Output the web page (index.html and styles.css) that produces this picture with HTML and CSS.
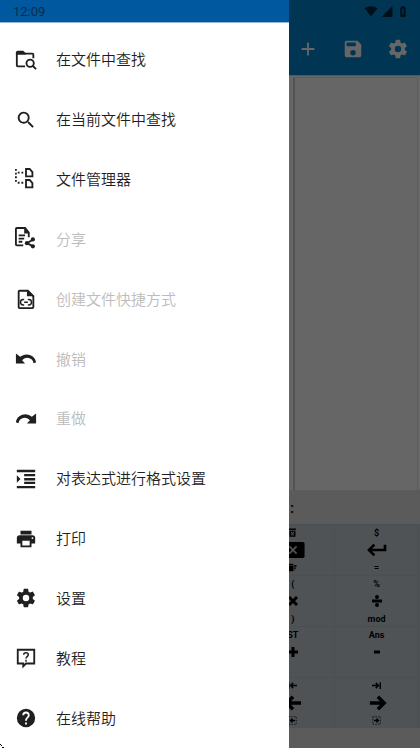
FILE: index.html
```html
<!DOCTYPE html>
<html lang="zh-CN">
<head>
<meta charset="utf-8">
<meta name="viewport" content="width=device-width, initial-scale=1">
<title>菜单</title>
<link rel="stylesheet" href="styles.css">
</head>
<body>
<main class="app">
  <header class="header">
    <div class="system">
      <svg viewBox="0 0 24 24" class="system-icon"><path d="M12 21 24 6C18 1 6 1 0 6z"/></svg>
      <svg viewBox="0 0 24 24" class="system-icon"><path d="M2 22h20V2z"/></svg>
      <svg viewBox="0 0 24 24" class="system-icon"><path fill-rule="evenodd" d="M15.700 4H14V2h-4v2H8.300C7.600 4 7 4.600 7 5.300v15.400c0 .7.600 1.300 1.300 1.300h7.400c.7 0 1.300-.6 1.300-1.300V5.300c0-.7-.6-1.300-1.300-1.300zM10.500 7h3v6l-2 6h-1z"/></svg>
    </div>
    <nav class="toolbar">
      <button class="tool" aria-label="新建"><svg class="icon" viewBox="0 0 24 24"><path d="M19 13h-6v6h-2v-6H5v-2h6V5h2v6h6z"/></svg></button>
      <button class="tool" aria-label="保存"><svg class="icon" viewBox="0 0 24 24"><path d="M17 3H5a2 2 0 0 0-2 2v14c0 1.100.9 2 2 2h14c1.100 0 2-.9 2-2V7zm-5 16a3 3 0 1 1 0-6 3 3 0 0 1 0 6zm3-10H5V5h10z"/></svg></button>
      <button class="tool" aria-label="设置"><svg class="icon" viewBox="0 0 24 24"><path d="M19.400 13a7.500 7.500 0 0 0 0-2l2.100-1.600c.2-.2.300-.4.100-.7l-2-3.400c-.1-.3-.4-.3-.6-.2l-2.500 1c-.5-.4-1.100-.7-1.700-1l-.4-2.600c0-.3-.2-.5-.5-.5h-4c-.2 0-.4.200-.5.500L9 5.100c-.6.300-1.200.6-1.700 1l-2.500-1c-.2-.1-.5 0-.6.200l-2 3.400c-.1.300-.1.500.1.700L4.500 11a7.500 7.500 0 0 0 0 2l-2.200 1.600c-.2.200-.2.400-.1.700l2 3.400c.1.300.4.300.6.200l2.500-1c.5.400 1.100.7 1.700 1l.4 2.600c.1.300.3.500.5.500h4c.3 0 .5-.2.500-.5l.4-2.600c.6-.3 1.200-.6 1.700-1l2.500 1c.2.100.5 0 .6-.2l2-3.400c.2-.3.100-.5-.1-.7zM12 15.500a3.500 3.500 0 1 1 0-7 3.500 3.500 0 0 1 0 7z"/></svg></button>
    </nav>
  </header>
  <section class="editor"><div class="page"></div></section>
  <div class="result">:</div>
  <section class="keypad">
    <button class="key key-first" aria-label="删除">
      <svg class="mini" viewBox="0 0 24 24"><path fill-rule="evenodd" d="M3 1h18v4H3zM4 7h16v16H4zM7 10l3 5-3 5h3l2-3 2 3h3l-3-5 3-5h-3l-2 3-2-3z"/></svg>
      <svg class="wide" viewBox="0 0 24 18"><path d="M0 0h23q2 0 2 2v14q0 2-2 2H0z"/><path class="cut" d="m8 5 8 8M16 5l-8 8"/></svg>
      <svg class="mini" viewBox="0 0 24 24"><path d="M0 2h14v4H0zM2 7h12v15H2zM15 6h8v4h-8zM15 12h6v3h-6zM15 17h3v3h-3z"/></svg>
    </button>
    <button class="key" aria-label="回车">
      <span>$</span>
      <svg class="wide" viewBox="0 0 24 18"><path class="stroke" d="M21 3v6H4M9 3 3 9l6 6"/></svg>
      <span>=</span>
    </button>
    <button class="key key-first"><span>(</span><svg class="op" viewBox="0 0 16 16"><path class="stroke" d="m4 4 8 8M12 4l-8 8"/></svg><span>)</span></button>
    <button class="key"><span>%</span><svg class="op" viewBox="0 0 16 16"><path class="stroke" d="M3 8h10"/><circle cx="8" cy="4" r="2"/><circle cx="8" cy="12" r="2"/></svg><span>mod</span></button>
    <button class="key key-first"><span>ST</span><svg class="op" viewBox="0 0 16 16"><path class="stroke" d="M3 8h10M8 3v10"/></svg><span></span></button>
    <button class="key"><span>Ans</span><svg class="op" viewBox="0 0 16 16"><path class="stroke" d="M5 8h6"/></svg><span></span></button>
    <button class="key key-first" aria-label="左移">
      <svg class="mini" viewBox="0 0 24 24"><path class="heavy" d="M2 3v18M24 12H8M14 5l-7 7 7 7"/></svg>
      <svg class="wide" viewBox="0 0 24 18"><path class="heavy" d="M21 9H6M12 2 5 9l7 7"/></svg>
      <svg class="mini" viewBox="0 0 24 24"><path class="dash" d="M2 2h20v20H2z"/><path class="heavy" d="M19 12H7M12 7l-5 5 5 5"/></svg>
    </button>
    <button class="key" aria-label="右移">
      <svg class="mini" viewBox="0 0 24 24"><path class="heavy" d="M22 3v18M0 12h16M10 5l7 7-7 7"/></svg>
      <svg class="wide" viewBox="0 0 24 18"><path class="heavy" d="M4 9h15M13 2l7 7-7 7"/></svg>
      <svg class="mini" viewBox="0 0 24 24"><path class="dash" d="M2 2h20v20H2z"/><path class="heavy" d="M5 12h12M12 7l5 5-5 5"/></svg>
    </button>
  </section>
  <footer class="footer"></footer>
</main>
<div class="scrim"></div>
<aside class="drawer">
  <div class="clock">12:09</div>
  <nav class="menu">
    <button class="item"><svg class="icon" viewBox="0 0 24 24"><path class="line" d="M11 19H3q-1 0-1-1V4M2 5h17q1 0 1 1v4"/><path d="M1 4q0-2 2-2h6l3 3v1H1z"/><circle class="line" cx="16.500" cy="15.500" r="4"/><path class="line" d="m19 18 4 4"/></svg><span>在文件中查找</span></button>
    <button class="item"><svg class="icon" viewBox="0 0 24 24"><path d="M15.500 14h-.8l-.3-.3a6.500 6.500 0 1 0-.7.700l.3.300v.8l5 5 1.500-1.500zm-6 0a4.500 4.500 0 1 1 0-9 4.500 4.500 0 0 1 0 9z"/></svg><span>在当前文件中查找</span></button>
    <button class="item"><svg class="icon" viewBox="0 0 24 24"><path class="dots" d="M1 0v16M3 4h7M3 15h7"/><path class="line" d="M12 0h4l3 3.500V8h-7zM12 12h4l3 3.500V20h-7z"/></svg><span>文件管理器</span></button>
    <button class="item" disabled><svg class="icon" viewBox="0 0 24 24"><path class="line" d="M9 19H2q-1 0-1-1V1q0-1 1-1h9l4 5v5M4 8h7M4 11.500h6M4 15h4"/><path d="M10 0v6h6z"/><path class="line" d="m20 12.500-7 4 7 3.500"/><circle cx="19.500" cy="12.500" r="2.300"/><circle cx="13" cy="16.500" r="2.300"/><circle cx="19.500" cy="20" r="2.300"/></svg><span>分享</span></button>
    <button class="item" disabled><svg class="icon" viewBox="0 0 24 24"><path class="line" d="M5 3h9l6 6v12q0 1-1 1H5q-1 0-1-1V4q0-1 1-1z"/><path d="M13 2v7h8z"/><path class="thin" d="M10 12.500H9a3 3 0 0 0 0 6h1M14 12.500h1a3 3 0 0 1 0 6h-1M10 15.500h4"/></svg><span>创建文件快捷方式</span></button>
    <button class="item" disabled><svg class="icon" viewBox="0 0 24 24"><path d="M12.500 7c-2.600 0-5 1-6.900 2.600L1 6v11h10l-3.300-3.600a7 7 0 0 1 12.500 3.200l2.900-1A10.500 10.500 0 0 0 12.500 7z"/></svg><span>撤销</span></button>
    <button class="item" disabled><svg class="icon" viewBox="0 0 24 24"><path d="M18.400 9.600A10.500 10.500 0 0 0 .9 15.600l2.900 1a7 7 0 0 1 12.500-3.200L13 17h10V6z"/></svg><span>重做</span></button>
    <button class="item"><svg class="icon" viewBox="0 0 24 24"><path d="M2 22h20v-2.500H2zM2 8v8l4-4zm8 9.500h12V15H10zM2 2v2.500h20V2zm8 7h12V6.500H10zm0 4.500h12V11H10z"/></svg><span>对表达式进行格式设置</span></button>
    <button class="item"><svg class="icon" viewBox="0 0 24 24"><path d="M19 8H5a3 3 0 0 0-3 3v6h4v4h12v-4h4v-6a3 3 0 0 0-3-3zm-3 11H8v-5h8zm3-7a1 1 0 1 1 0-2 1 1 0 0 1 0 2zM18 3H6v4h12z"/></svg><span>打印</span></button>
    <button class="item"><svg class="icon" viewBox="0 0 24 24"><path d="M19.400 13a7.500 7.500 0 0 0 0-2l2.100-1.600c.2-.2.300-.4.100-.7l-2-3.400c-.1-.3-.4-.3-.6-.2l-2.500 1c-.5-.4-1.100-.7-1.700-1l-.4-2.600c0-.3-.2-.5-.5-.5h-4c-.2 0-.4.200-.5.500L9 5.100c-.6.300-1.200.6-1.700 1l-2.500-1c-.2-.1-.5 0-.6.200l-2 3.400c-.1.300-.1.500.1.700L4.500 11a7.500 7.500 0 0 0 0 2l-2.200 1.600c-.2.200-.2.400-.1.700l2 3.400c.1.300.4.300.6.200l2.500-1c.5.400 1.100.7 1.700 1l.4 2.600c.1.300.3.500.5.500h4c.3 0 .5-.2.500-.5l.4-2.600c.6-.3 1.200-.6 1.700-1l2.500 1c.2.100.5 0 .6-.2l2-3.400c.2-.3.100-.5-.1-.7zM12 15.500a3.500 3.500 0 1 1 0-7 3.500 3.500 0 0 1 0 7z"/></svg><span>设置</span></button>
    <button class="item"><svg class="icon" viewBox="0 0 24 24"><path class="line" d="M3 3h18v15h-9l-3 3v-3H3z"/><path class="thin" d="M9.500 8.500c0-3 5-3 5 0 0 2-2.500 2-2.500 4M12 14v2"/></svg><span>教程</span></button>
    <button class="item"><svg class="icon" viewBox="0 0 24 24"><path d="M12 2a10 10 0 1 0 0 20 10 10 0 0 0 0-20zm1 17h-2v-2h2zm2.100-7.700-.9.900c-.8.700-1.200 1.300-1.200 2.800h-2v-.5c0-1.100.4-2.100 1.200-2.800l1.200-1.300c.4-.3.600-.8.600-1.400a2 2 0 1 0-4 0H8a4 4 0 1 1 8 0c0 .9-.4 1.700-.9 2.300z"/></svg><span>在线帮助</span></button>
  </nav>
  <svg class="pointer" viewBox="0 0 4 4"><path d="M0 0h1v1H0zM1 1h1v1H1zM2 3h2v1H2z"/></svg>
</aside>
</body>
</html>
```
FILE: styles.css
```css
* { box-sizing: border-box; }

body {
  margin: 0;
  font-family: Roboto, "Noto Sans CJK SC", sans-serif;
  color: #1f1f1f;
}

button {
  margin: 0;
  padding: 0;
  border: 0;
  background: none;
  color: inherit;
  font: inherit;
}

.icon {
  flex: none;
  width: 22px;
  height: 22px;
  fill: currentColor;
  overflow: visible;
}

.line, .thin, .dots, .stroke, .heavy, .dash {
  fill: none;
  stroke: currentColor;
  stroke-width: 2;
}

.thin { stroke-width: 1.6; }
.dots { stroke-dasharray: 2 2; }
.stroke { stroke-width: 3; }
.heavy { stroke-width: 4; }
.dash { stroke-dasharray: 4 3; }

.cut {
  stroke: #c7d0d6;
  stroke-width: 2;
}

.app {
  display: flex;
  flex-direction: column;
  min-height: 100vh;
  background: #e4e4e4;
}

.header {
  background: #0087d2;
  color: #fff;
}

.system {
  display: flex;
  justify-content: flex-end;
  align-items: center;
  gap: 2px;
  height: 22px;
  padding-right: 10px;
  color: #00283c;
}

.system-icon {
  width: 14px;
  height: 13px;
  fill: currentColor;
}

.toolbar {
  display: flex;
  justify-content: flex-end;
  height: 53px;
}

.tool {
  display: flex;
  align-items: center;
  justify-content: center;
  width: 45px;
}

.editor {
  flex: 1;
  display: flex;
  padding: 1px 2px 0 0;
  background: #fff;
  border-top: 1px solid #ddd;
}

.page {
  width: 30%;
  margin-left: auto;
  border: 1px solid #e8e8e8;
  border-left: 2px solid #d0d0d0;
  border-bottom: 0;
}

.result {
  height: 34px;
  padding-left: 290px;
  font-size: 15px;
  font-weight: 700;
  line-height: 36px;
}

.keypad {
  display: grid;
  grid-template-columns: repeat(5, 1fr);
  grid-auto-rows: 51px;
  padding-right: 1px;
  background: #c7d0d6;
}

.key {
  display: grid;
  grid-template-rows: 15px 20px 15px;
  place-items: center;
  border: 1px solid #bdc6cc;
  border-width: 1px 1px 0 0;
  color: #000;
  font-size: 9px;
  font-weight: 700;
  line-height: 12px;
}

.key-first { grid-column: 4; }

.key svg {
  fill: currentColor;
  overflow: visible;
}

.mini {
  width: 9px;
  height: 9px;
}

.wide {
  width: 22px;
  height: 16px;
}

.op {
  width: 16px;
  height: 16px;
}

.footer { height: 20px; }

.scrim {
  position: absolute;
  inset: 0;
  background: rgba(0, 0, 0, 0.6);
}

.drawer {
  position: absolute;
  inset: 0 auto 0 0;
  display: flex;
  flex-direction: column;
  width: 289px;
  max-width: 85%;
  background: #fff;
}

.clock {
  height: 23px;
  padding-left: 13px;
  background: #00589f;
  border-bottom: 1px solid #8fb8d8;
  color: #0c2c49;
  font-size: 13px;
  line-height: 24px;
}

.menu {
  flex: 1;
  display: grid;
  grid-auto-rows: 1fr;
  padding-top: 7px;
}

.item {
  display: flex;
  align-items: center;
  gap: 19px;
  padding: 0 15px;
  font-size: 15px;
  font-weight: 350;
  line-height: 22px;
  text-align: left;
}

.item span { padding-top: 1px; }

.item:disabled span { color: #bcbcbc; }

.pointer {
  position: absolute;
  bottom: 0;
  left: 0;
  width: 4px;
  height: 4px;
}
```
